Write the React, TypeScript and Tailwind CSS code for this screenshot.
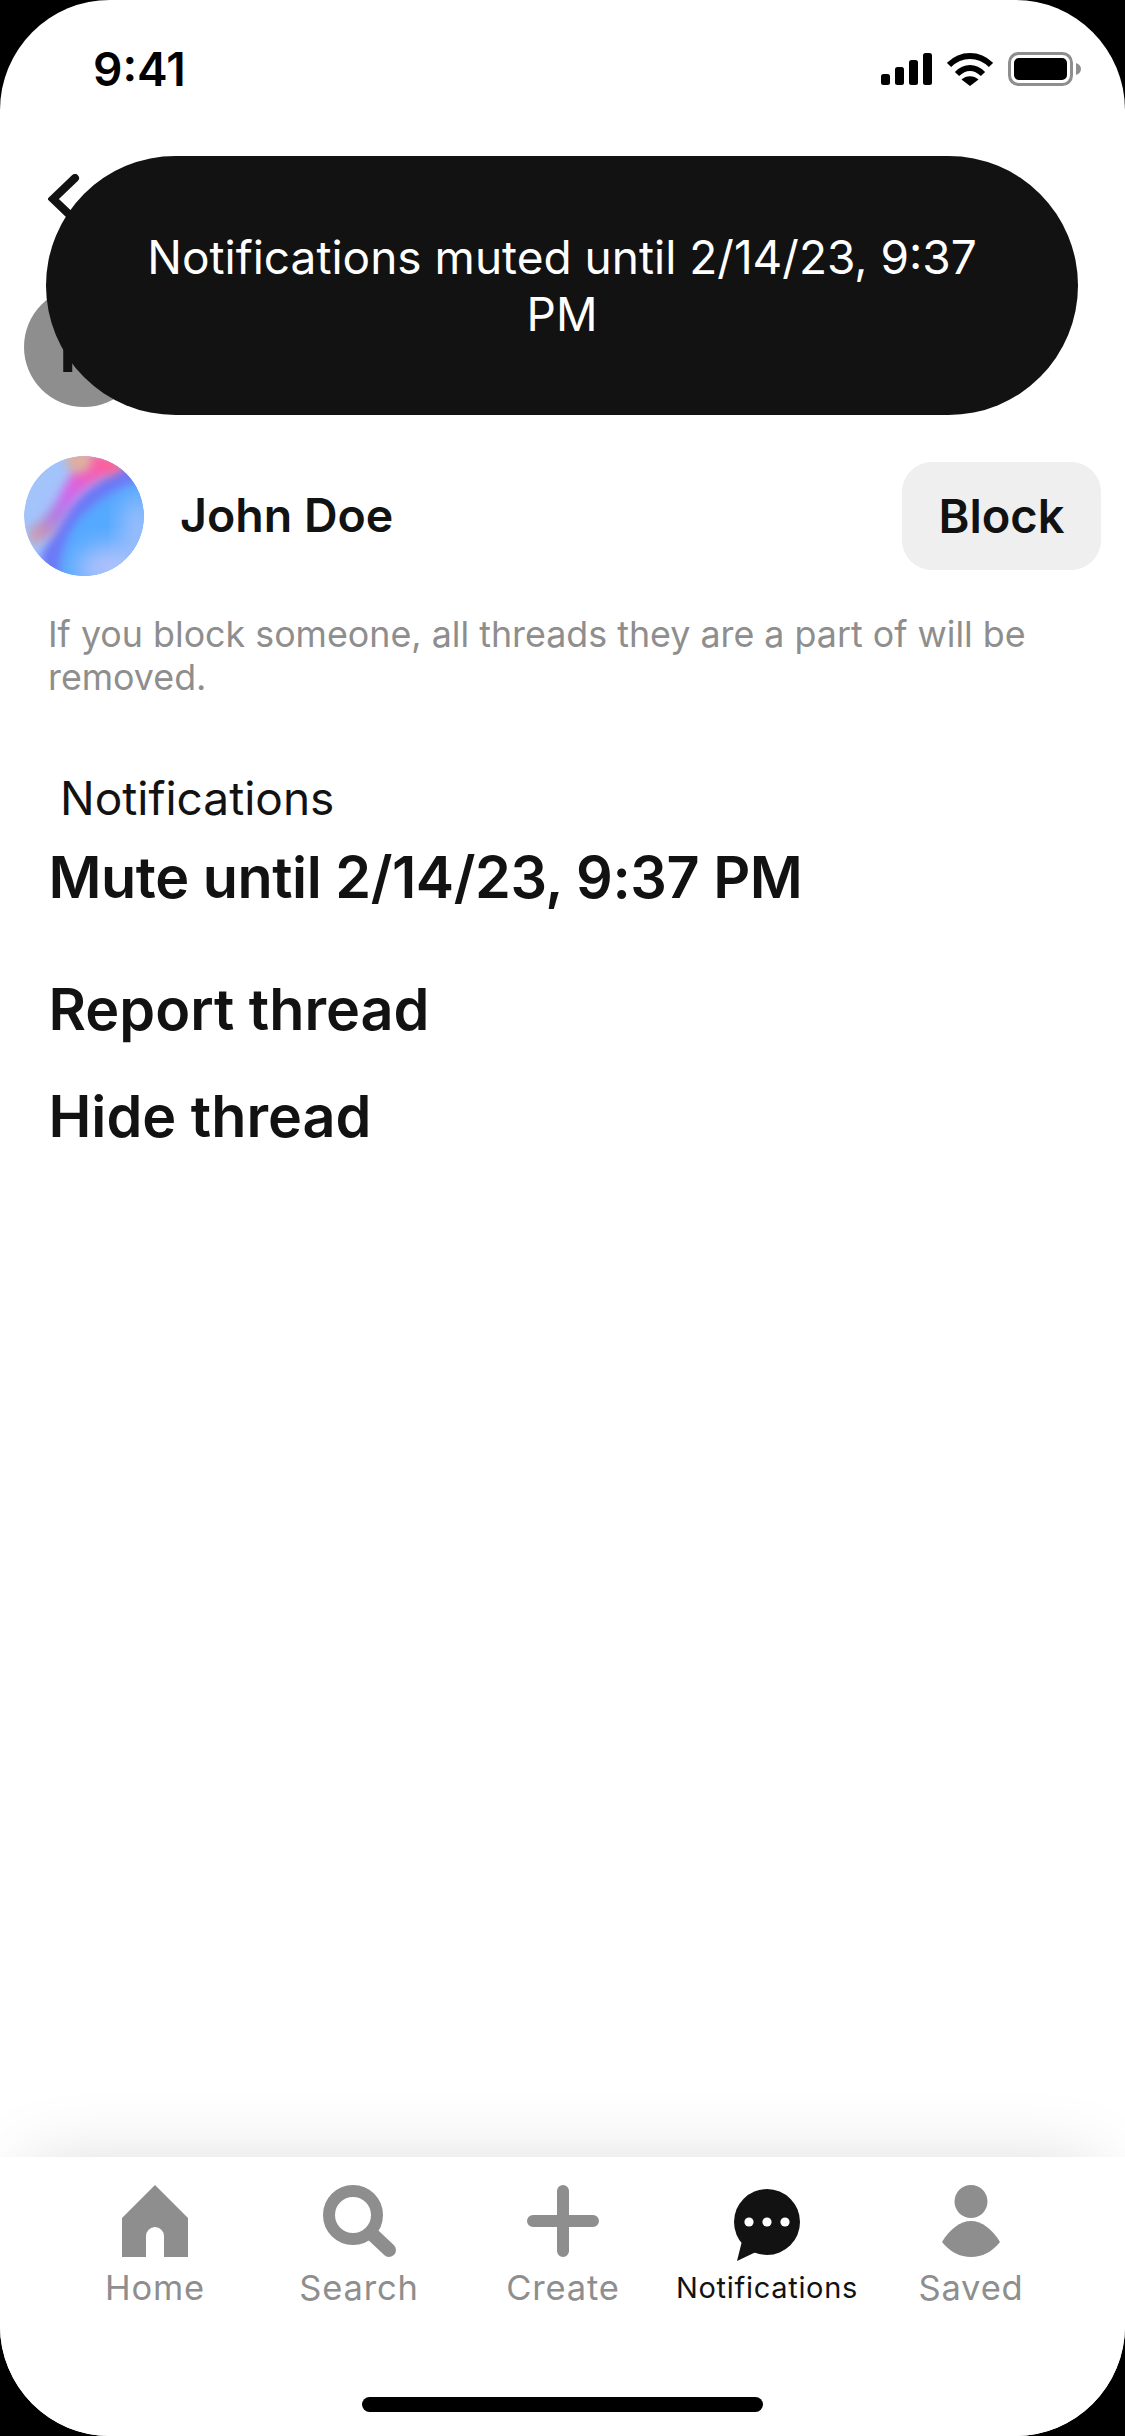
const tabs = [
  { label: 'Home', icon: <HomeIcon /> },
  { label: 'Search', icon: <SearchIcon /> },
  { label: 'Create', icon: <PlusIcon /> },
  { label: 'Notifications', icon: <BubbleIcon />, active: true },
  { label: 'Saved', icon: <PersonIcon /> },
]

function HomeIcon() {
  return (
    <svg width="66" height="72" viewBox="0 0 66 72" fill="#8e8e8e">
      <path d="M33 0 L66 33 V72 H42 V51 a9 9 0 0 0 -18 0 V72 H0 V33 Z" />
    </svg>
  )
}

function SearchIcon() {
  return (
    <svg width="73" height="72" viewBox="0 0 73 72" fill="none" stroke="#8e8e8e">
      <circle cx="30" cy="30" r="24" strokeWidth="12" />
      <path d="M49 49 L66 65" strokeWidth="14" strokeLinecap="round" />
    </svg>
  )
}

function PlusIcon() {
  return (
    <svg width="72" height="72" viewBox="0 0 72 72" fill="none" stroke="#8e8e8e" strokeWidth="12" strokeLinecap="round">
      <path d="M36 6 V66 M6 36 H66" />
    </svg>
  )
}

function BubbleIcon() {
  return (
    <svg width="66" height="72" viewBox="0 0 66 72" className="translate-y-[4px]">
      <ellipse cx="33" cy="33" rx="33" ry="33" fill="#121212" />
      <path d="M8 52 L3 72 L24 62 Z" fill="#121212" />
      <circle cx="15" cy="33" r="4.6" fill="#fff" />
      <circle cx="33" cy="33" r="4.6" fill="#fff" />
      <circle cx="51" cy="33" r="4.6" fill="#fff" />
    </svg>
  )
}

function PersonIcon() {
  return (
    <svg width="58" height="72" viewBox="0 0 58 72" fill="#8e8e8e">
      <circle cx="29" cy="16.5" r="16.5" />
      <path d="M0 57 C8 44 18 36 29 36 C40 36 50 44 58 57 C50 67 40 72 29 72 C18 72 8 67 0 57 Z" />
    </svg>
  )
}

function StatusIcons() {
  return (
    <div className="flex items-center gap-[15px]">
      <svg width="51" height="32" viewBox="0 0 51 32" fill="#000">
        <rect x="0" y="21" width="9" height="11" rx="2.5" />
        <rect x="14" y="14" width="9" height="18" rx="2.5" />
        <rect x="28" y="7" width="9" height="25" rx="2.5" />
        <rect x="42" y="0" width="9" height="32" rx="2.5" />
      </svg>
      <svg width="46" height="34" viewBox="0 0 46 34" fill="none" stroke="#000" strokeWidth="6">
        <path d="M2 13 C14 1 32 1 44 13" />
        <path d="M10 22 C18 14 28 14 36 22" />
        <path d="M14.500 27.500 C19 23 27 23 31.500 27.500 L23 34 Z" fill="#000" stroke="none" />
      </svg>
      <svg width="74" height="34" viewBox="0 0 74 34" fill="none">
        <rect x="1.500" y="1.500" width="62" height="31" rx="9" stroke="#8e8e8e" strokeWidth="3" />
        <rect x="6" y="6" width="53" height="22" rx="5" fill="#000" />
        <path d="M68 11 C71 12 73 14 73 17 C73 20 71 22 68 23 Z" fill="#8e8e8e" />
      </svg>
    </div>
  )
}

function GradientAvatar() {
  return (
    <svg width="120" height="120" viewBox="0 0 120 120" className="rounded-full shrink-0">
      <defs>
        <filter id="b5" x="-40%" y="-40%" width="180%" height="180%">
          <feGaussianBlur stdDeviation="5" />
        </filter>
        <filter id="b12" x="-40%" y="-40%" width="180%" height="180%">
          <feGaussianBlur stdDeviation="12" />
        </filter>
        <linearGradient id="warm" gradientUnits="userSpaceOnUse" x1="88" y1="8" x2="12" y2="84">
          <stop offset="0" stopColor="#ff6090" />
          <stop offset="0.25" stopColor="#ef5cc4" />
          <stop offset="0.5" stopColor="#cd68ee" />
          <stop offset="0.72" stopColor="#b07ce0" />
          <stop offset="1" stopColor="#cba0ae" />
        </linearGradient>
        <clipPath id="circle">
          <circle cx="60" cy="60" r="60" />
        </clipPath>
      </defs>
      <g clipPath="url(#circle)">
        <rect width="120" height="120" fill="#a3c3fb" />
        <g filter="url(#b5)">
          {/* violet edge and blue body, lower right of the band */}
          <path d="M112 4 L140 40 L140 140 L24 140 L16 100 Q30 76 44 52 Q68 22 112 4 Z" fill="#6a78f6" />
          <path d="M120 24 L140 40 L140 140 L36 140 Q32 90 56 62 Q80 36 120 24 Z" fill="#55a9ff" />
        </g>
        <ellipse cx="114" cy="74" rx="16" ry="34" fill="#a0c0fc" filter="url(#b12)" />
        <ellipse cx="88" cy="112" rx="36" ry="22" fill="#b0c2fc" filter="url(#b12)" />
        {/* warm band */}
        <path
          d="M66 -4 L98 4 L98 16 Q68 22 50 46 Q38 64 28 80 L8 90 L4 74 Q26 60 36 38 Q48 14 66 -4 Z"
          fill="url(#warm)"
          filter="url(#b5)"
        />
        <ellipse cx="55" cy="4" rx="13" ry="13" fill="#dfae9e" filter="url(#b5)" />
      </g>
    </svg>
  )
}

export default function App() {
  return (
    <div className="w-[1125px] h-[2436px] bg-black font-['Inter',sans-serif]">
      <div className="relative w-full h-full bg-white rounded-[110px] overflow-hidden flex flex-col">
        {/* Status bar */}
        <div className="h-[138px] pl-[93px] pr-[43px] flex items-center justify-between shrink-0">
          <span className="text-[46px] leading-none font-semibold text-black">9:41</span>
          <StatusIcons />
        </div>

        {/* Back */}
        <div className="pl-[48px] pt-[36px] h-[100px] shrink-0">
          <svg width="32" height="50" viewBox="0 0 32 50" fill="none" stroke="#121212" strokeWidth="8" strokeLinecap="round">
            <path d="M27 4 L5 25 L27 46" />
          </svg>
        </div>

        {/* Thread avatar, mostly under the toast */}
        <div className="pl-[24px] mt-[49px] shrink-0">
          <div className="w-[120px] h-[120px] rounded-full bg-[#8e8e8e] flex items-center justify-center text-[68px] leading-none font-semibold text-[#121212]">
            N
          </div>
        </div>

        {/* Member row */}
        <div className="mt-[49px] pl-[24px] pr-[24px] flex items-center justify-between shrink-0">
          <div className="flex items-center gap-[36px]">
            <GradientAvatar />
            <span className="text-[46.5px] font-semibold text-[#121212]">John Doe</span>
          </div>
          <button className="w-[199px] h-[108px] rounded-[30px] bg-[#efefef] text-[47px] font-semibold text-[#121212]">
            Block
          </button>
        </div>

        <p className="mt-[37px] px-[48px] text-[35.8px] leading-[43px] text-[#8e8e8e] shrink-0">
          If you block someone, all threads they are a part of will be removed.
        </p>

        <div className="mt-[72px] pl-[60px] text-[46px] leading-[54px] text-[#121212] shrink-0">Notifications</div>

        <div className="mt-[22px] pl-[48.5px] flex flex-col gap-[47px] text-[57.5px] leading-[60px] font-semibold text-[#121212]">
          <div className="mb-[25px] tracking-[-0.45px]">Mute until 2/14/23, 9:37 PM</div>
          <div>Report thread</div>
          <div>Hide thread</div>
        </div>

        {/* Tab bar */}
        <div className="mt-auto h-[279px] bg-white shadow-[0_-20px_70px_-30px_rgba(0,0,0,0.17)] shrink-0 relative">
          <div className="pt-[28px] pl-[53px] flex">
            {tabs.map((tab) => (
              <div key={tab.label} className="w-[204px] flex flex-col items-center">
                <div className="h-[72px] flex items-center justify-center">{tab.icon}</div>
                <span
                  className={
                    tab.active
                      ? 'mt-[9px] h-[44px] leading-[44px] text-[29px] tracking-[0.7px] text-[#121212]'
                      : 'mt-[9px] h-[44px] leading-[44px] text-[34.5px] tracking-[0.8px] text-[#8e8e8e]'
                  }
                >
                  {tab.label}
                </span>
              </div>
            ))}
          </div>
          <div className="absolute left-[362px] bottom-[24px] w-[401px] h-[15px] rounded-full bg-black" />
        </div>

        {/* Toast */}
        <div className="absolute left-[46px] top-[156px] w-[1032px] h-[259px] rounded-[130px] bg-[#121212] flex items-center justify-center px-[90px]">
          <p className="text-[46px] leading-[57px] text-white text-center">Notifications muted until 2/14/23, 9:37 PM</p>
        </div>
      </div>
    </div>
  )
}
